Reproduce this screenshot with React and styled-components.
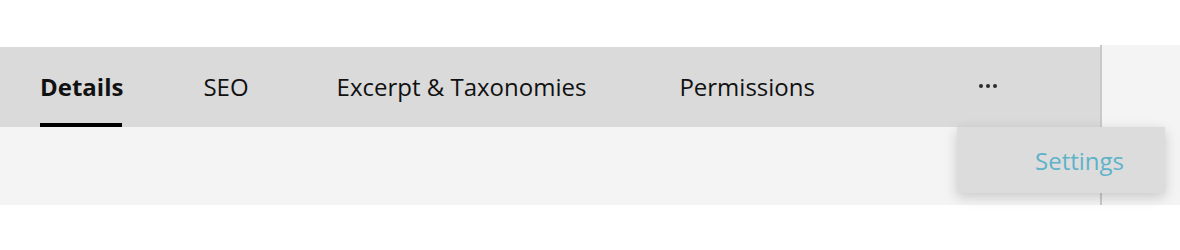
import React, { useState } from "react";
import styled, { createGlobalStyle } from "styled-components";

const GlobalStyle = createGlobalStyle`
  html, body {
    margin: 0;
    padding: 0;
    background: #ffffff;
    font-family: "Open Sans", "Noto Sans", sans-serif;
  }
`;

const Page = styled.div`
  width: 1180px;
  height: 250px;
  padding-top: 45px;
  box-sizing: border-box;
`;

const Frame = styled.div`
  display: flex;
  height: 160px;
`;

const Main = styled.div`
  position: relative;
  flex: 0 0 1100px;
  display: flex;
  flex-direction: column;
  padding-top: 2px;
  box-sizing: border-box;
`;

const Sidebar = styled.div`
  flex: 1;
  background: #f4f4f4;
  border-left: 2px solid #c9c9c9;
`;

const TabBar = styled.div`
  display: flex;
  align-items: stretch;
  height: 80px;
  padding-left: 40px;
  background: #dadada;
`;

const Tab = styled.button`
  position: relative;
  display: flex;
  align-items: center;
  margin-right: ${(p) => p.$space}px;
  padding: 0 0 2px;
  border: 0;
  background: none;
  font-family: inherit;
  font-size: 24px;
  font-weight: ${(p) => (p.$active ? 700 : 400)};
  color: #111111;
  cursor: pointer;

  &::after {
    content: "";
    position: absolute;
    left: 0;
    right: 1px;
    bottom: 0;
    height: 4px;
    background: ${(p) => (p.$active ? "#000000" : "transparent")};
  }
`;

const More = styled.button`
  display: flex;
  align-items: center;
  gap: 3px;
  padding: 0 0 2px 2px;
  border: 0;
  background: none;
  cursor: pointer;
`;

const Dot = styled.span`
  width: 4px;
  height: 4px;
  border-radius: 50%;
  background: #2b2b2b;
`;

const Content = styled.div`
  flex: 1;
  background: #f4f4f4;
`;

const Menu = styled.div`
  position: absolute;
  left: 957px;
  top: 82px;
  width: 208px;
  height: 66px;
  display: flex;
  align-items: center;
  justify-content: flex-end;
  padding-right: 41px;
  box-sizing: border-box;
  background: #dcdcdc;
  box-shadow: 0 4px 12px rgba(0, 0, 0, 0.18);
`;

const MenuItem = styled.span`
  font-size: 24px;
  color: #5fb3c9;
`;

const tabs = [
  { label: "Details", space: 80 },
  { label: "SEO", space: 88 },
  { label: "Excerpt & Taxonomies", space: 93 },
  { label: "Permissions", space: 162 },
];

export default function App() {
  const [active, setActive] = useState("Details");

  return (
    <Page>
      <GlobalStyle />
      <Frame>
        <Main>
          <TabBar>
            {tabs.map((t) => (
              <Tab
                key={t.label}
                $active={active === t.label}
                $space={t.space}
                onClick={() => setActive(t.label)}
              >
                {t.label}
              </Tab>
            ))}
            <More aria-label="More">
              <Dot />
              <Dot />
              <Dot />
            </More>
          </TabBar>
          <Content />
          <Menu>
            <MenuItem>Settings</MenuItem>
          </Menu>
        </Main>
        <Sidebar />
      </Frame>
    </Page>
  );
}
